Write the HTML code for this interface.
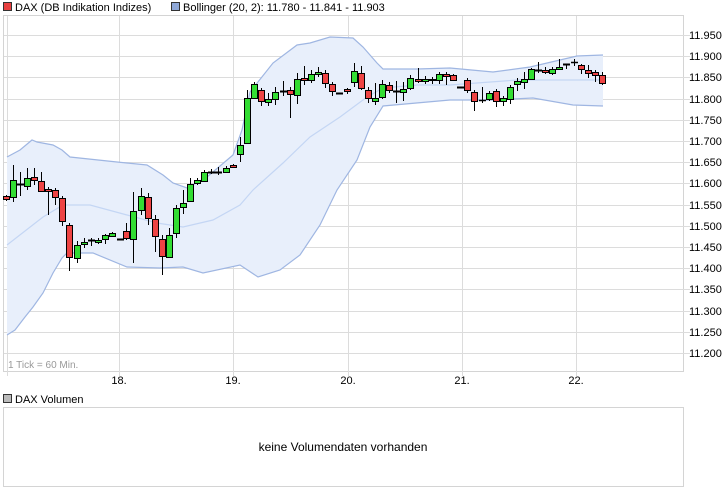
<!DOCTYPE html>
<html><head><meta charset="utf-8"><style>
body{margin:0;background:#fff;width:726px;height:496px;overflow:hidden;font-family:"Liberation Sans",sans-serif;}
svg{position:absolute;left:0;top:0}
</style></head><body>
<svg width="726" height="496" xmlns="http://www.w3.org/2000/svg" font-family="Liberation Sans, sans-serif">
<!-- legend -->
<rect x="3.5" y="2.5" width="8" height="8" fill="#e84040" stroke="#333"/>
<text x="15" y="11" font-size="11">DAX (DB Indikation Indizes)</text>
<rect x="171.5" y="2.5" width="8" height="8" fill="#8fa8d8" stroke="#333"/>
<text x="183" y="11" font-size="11">Bollinger (20, 2): 11.780 - 11.841 - 11.903</text>
<!-- chart frame -->
<rect x="3.5" y="15.5" width="680" height="356" fill="#fff" stroke="#d4d4d4"/>
<g stroke="#dcdcdc" stroke-width="1">
<line x1="4" y1="35.5" x2="690" y2="35.5"/><line x1="4" y1="56.5" x2="690" y2="56.5"/><line x1="4" y1="77.5" x2="690" y2="77.5"/><line x1="4" y1="99.5" x2="690" y2="99.5"/><line x1="4" y1="120.5" x2="690" y2="120.5"/><line x1="4" y1="141.5" x2="690" y2="141.5"/><line x1="4" y1="162.5" x2="690" y2="162.5"/><line x1="4" y1="183.5" x2="690" y2="183.5"/><line x1="4" y1="205.5" x2="690" y2="205.5"/><line x1="4" y1="226.5" x2="690" y2="226.5"/><line x1="4" y1="247.5" x2="690" y2="247.5"/><line x1="4" y1="268.5" x2="690" y2="268.5"/><line x1="4" y1="289.5" x2="690" y2="289.5"/><line x1="4" y1="311.5" x2="690" y2="311.5"/><line x1="4" y1="332.5" x2="690" y2="332.5"/><line x1="4" y1="353.5" x2="690" y2="353.5"/>
<line x1="7.5" y1="16" x2="7.5" y2="376"/><line x1="119.5" y1="16" x2="119.5" y2="376"/><line x1="233.5" y1="16" x2="233.5" y2="376"/><line x1="348.5" y1="16" x2="348.5" y2="376"/><line x1="462.5" y1="16" x2="462.5" y2="376"/><line x1="576.5" y1="16" x2="576.5" y2="376"/>
</g>
<!-- bollinger band -->
<path d="M7,157 L20,150 L32,140 L37,142 L53,145 L62,150 L70,157 L117,162 L147,165 L163,175 L173,183 L187,188 L207,177 L233,155 L242,130 L250,92 L273,63 L297,45 L310,43 L330,37 L353,38 L363,47 L377,63 L383,69 L417,69 L450,68 L493,72 L530,67 L577,56 L603,55 L603,106 L573,105 L533,98 L493,100 L450,100 L383,106 L370,127 L357,160 L337,190 L320,225 L300,255 L280,270 L258,277 L240,265 L203,273 L183,267 L160,268 L127,267 L93,253 L67,253 L62,258 L53,273 L43,293 L33,307 L25,317 L15,330 L7,335 Z" fill="#e8effb" stroke="none"/>
<path d="M7,157 L20,150 L32,140 L37,142 L53,145 L62,150 L70,157 L117,162 L147,165 L163,175 L173,183 L187,188 L207,177 L233,155 L242,130 L250,92 L273,63 L297,45 L310,43 L330,37 L353,38 L363,47 L377,63 L383,69 L417,69 L450,68 L493,72 L530,67 L577,56 L603,55" fill="none" stroke="#9fb6e2" stroke-width="1.2"/>
<path d="M7,335 L15,330 L25,317 L33,307 L43,293 L53,273 L62,258 L67,253 L93,253 L127,267 L160,268 L183,267 L203,273 L240,265 L258,277 L280,270 L300,255 L320,225 L337,190 L357,160 L370,127 L383,106 L450,100 L493,100 L533,98 L573,105 L603,106" fill="none" stroke="#9fb6e2" stroke-width="1.2"/>
<path d="M7,245 L43,217 L63,205 L90,205 L127,215 L157,223 L183,227 L213,220 L240,205 L253,190 L283,163 L310,137 L340,117 L367,97 L383,88 L417,85 L450,85 L517,80 L603,80" fill="none" stroke="#c4d6f4" stroke-width="1.2"/>
<!-- candles -->
<g stroke="#000" stroke-width="1">
<line x1="6.5" y1="195" x2="6.5" y2="201"/><rect x="3.5" y="196.5" width="6" height="3" fill="#ee4444"/>
<line x1="13.5" y1="165" x2="13.5" y2="202"/><rect x="10.5" y="180.5" width="6" height="17" fill="#33dd33"/>
<line x1="20.5" y1="172" x2="20.5" y2="196"/><line x1="17" y1="184.5" x2="24" y2="184.5" stroke-width="2"/>
<line x1="27.5" y1="168" x2="27.5" y2="190"/><rect x="24.5" y="178.5" width="6" height="8" fill="#33dd33"/>
<line x1="34.5" y1="168" x2="34.5" y2="185"/><rect x="31.5" y="177.5" width="6" height="3" fill="#ee4444"/>
<line x1="41.5" y1="172" x2="41.5" y2="192"/><rect x="38.5" y="181.5" width="6" height="10" fill="#ee4444"/>
<line x1="48.5" y1="187" x2="48.5" y2="215"/><rect x="45.5" y="189.5" width="6" height="2" fill="#ee4444"/>
<line x1="55.5" y1="188" x2="55.5" y2="205"/><rect x="52.5" y="190.5" width="6" height="7" fill="#ee4444"/>
<line x1="62.5" y1="196" x2="62.5" y2="226"/><rect x="59.5" y="198.5" width="6" height="23" fill="#ee4444"/>
<line x1="69.5" y1="223" x2="69.5" y2="271"/><rect x="66.5" y="225.5" width="6" height="32" fill="#ee4444"/>
<line x1="77.5" y1="241" x2="77.5" y2="263"/><rect x="74.5" y="245.5" width="6" height="13" fill="#33dd33"/>
<line x1="84.5" y1="238" x2="84.5" y2="248"/><rect x="81.5" y="242.5" width="6" height="2" fill="#33dd33"/>
<line x1="91.5" y1="238" x2="91.5" y2="246"/><line x1="88" y1="240.5" x2="95" y2="240.5" stroke-width="2"/>
<line x1="98.5" y1="238" x2="98.5" y2="244"/><rect x="95.5" y="240.5" width="6" height="2" fill="#33dd33"/>
<line x1="105.5" y1="234" x2="105.5" y2="244"/><rect x="102.5" y="235.5" width="6" height="4" fill="#33dd33"/>
<line x1="112.5" y1="232" x2="112.5" y2="237"/><rect x="109.5" y="233.5" width="6" height="3" fill="#33dd33"/>
<line x1="117" y1="239.5" x2="124" y2="239.5" stroke-width="2"/>
<line x1="126.5" y1="223" x2="126.5" y2="240"/><rect x="123.5" y="231.5" width="6" height="7" fill="#ee4444"/>
<line x1="133.5" y1="192" x2="133.5" y2="263"/><rect x="130.5" y="211.5" width="6" height="28" fill="#33dd33"/>
<line x1="141.5" y1="188" x2="141.5" y2="215"/><rect x="138.5" y="196.5" width="6" height="14" fill="#33dd33"/>
<line x1="148.5" y1="193" x2="148.5" y2="225"/><rect x="145.5" y="197.5" width="6" height="21" fill="#ee4444"/>
<line x1="155.5" y1="215" x2="155.5" y2="252"/><rect x="152.5" y="219.5" width="6" height="17" fill="#ee4444"/>
<line x1="162.5" y1="235" x2="162.5" y2="275"/><rect x="159.5" y="239.5" width="6" height="17" fill="#ee4444"/>
<line x1="169.5" y1="228" x2="169.5" y2="258"/><rect x="166.5" y="235.5" width="6" height="22" fill="#33dd33"/>
<line x1="176.5" y1="205" x2="176.5" y2="238"/><rect x="173.5" y="208.5" width="6" height="25" fill="#33dd33"/>
<line x1="183.5" y1="190" x2="183.5" y2="214"/><rect x="180.5" y="203.5" width="6" height="4" fill="#33dd33"/>
<line x1="190.5" y1="178" x2="190.5" y2="202"/><rect x="187.5" y="184.5" width="6" height="17" fill="#33dd33"/>
<line x1="197.5" y1="178" x2="197.5" y2="185"/><rect x="194.5" y="180.5" width="6" height="3" fill="#33dd33"/>
<line x1="204.5" y1="170" x2="204.5" y2="182"/><rect x="201.5" y="172.5" width="6" height="9" fill="#33dd33"/>
<line x1="211.5" y1="169" x2="211.5" y2="174"/><line x1="208" y1="172.5" x2="215" y2="172.5" stroke-width="2"/>
<line x1="218.5" y1="167" x2="218.5" y2="175"/><line x1="215" y1="172.5" x2="222" y2="172.5" stroke-width="2"/>
<line x1="226.5" y1="166" x2="226.5" y2="173"/><rect x="223.5" y="168.5" width="6" height="4" fill="#33dd33"/>
<line x1="233.5" y1="164" x2="233.5" y2="168"/><rect x="230.5" y="165.5" width="6" height="2" fill="#ee4444"/>
<line x1="240.5" y1="137" x2="240.5" y2="162"/><rect x="237.5" y="145.5" width="6" height="9" fill="#33dd33"/>
<line x1="247.5" y1="90" x2="247.5" y2="144"/><rect x="244.5" y="98.5" width="6" height="45" fill="#33dd33"/>
<line x1="254.5" y1="82" x2="254.5" y2="99"/><rect x="251.5" y="84.5" width="6" height="14" fill="#33dd33"/>
<line x1="261.5" y1="88" x2="261.5" y2="106"/><rect x="258.5" y="90.5" width="6" height="11" fill="#ee4444"/>
<line x1="268.5" y1="93" x2="268.5" y2="106"/><rect x="265.5" y="99.5" width="6" height="3" fill="#33dd33"/>
<line x1="275.5" y1="87" x2="275.5" y2="105"/><rect x="272.5" y="92.5" width="6" height="7" fill="#33dd33"/>
<line x1="283.5" y1="81" x2="283.5" y2="96"/><line x1="280" y1="91.5" x2="287" y2="91.5" stroke-width="2"/>
<line x1="290.5" y1="87" x2="290.5" y2="118"/><rect x="287.5" y="90.5" width="6" height="4" fill="#ee4444"/>
<line x1="297.5" y1="73" x2="297.5" y2="104"/><rect x="294.5" y="79.5" width="6" height="16" fill="#33dd33"/>
<line x1="304.5" y1="66" x2="304.5" y2="85"/><rect x="301.5" y="78.5" width="6" height="2" fill="#ee4444"/>
<line x1="311.5" y1="70" x2="311.5" y2="83"/><rect x="308.5" y="74.5" width="6" height="6" fill="#33dd33"/>
<line x1="318.5" y1="67" x2="318.5" y2="77"/><rect x="315.5" y="72.5" width="6" height="2" fill="#33dd33"/>
<line x1="325.5" y1="70" x2="325.5" y2="88"/><rect x="322.5" y="73.5" width="6" height="10" fill="#ee4444"/>
<line x1="332.5" y1="82" x2="332.5" y2="96"/><rect x="329.5" y="84.5" width="6" height="7" fill="#ee4444"/>
<line x1="336" y1="93.5" x2="343" y2="93.5" stroke-width="2"/>
<line x1="347.5" y1="88" x2="347.5" y2="94"/><rect x="344.5" y="89.5" width="6" height="2" fill="#ee4444"/>
<line x1="354.5" y1="63" x2="354.5" y2="87"/><rect x="351.5" y="71.5" width="6" height="11" fill="#33dd33"/>
<line x1="361.5" y1="66" x2="361.5" y2="90"/><rect x="358.5" y="73.5" width="6" height="15" fill="#ee4444"/>
<line x1="368.5" y1="87" x2="368.5" y2="103"/><rect x="365.5" y="90.5" width="6" height="8" fill="#ee4444"/>
<line x1="375.5" y1="83" x2="375.5" y2="105"/><rect x="372.5" y="98.5" width="6" height="3" fill="#33dd33"/>
<line x1="382.5" y1="80" x2="382.5" y2="99"/><rect x="379.5" y="84.5" width="6" height="13" fill="#33dd33"/>
<line x1="389.5" y1="82" x2="389.5" y2="93"/><rect x="386.5" y="85.5" width="6" height="5" fill="#ee4444"/>
<line x1="396.5" y1="81" x2="396.5" y2="103"/><line x1="393" y1="91.5" x2="400" y2="91.5" stroke-width="2"/>
<line x1="403.5" y1="82" x2="403.5" y2="101"/><rect x="400.5" y="89.5" width="6" height="3" fill="#33dd33"/>
<line x1="410.5" y1="75" x2="410.5" y2="90"/><rect x="407.5" y="78.5" width="6" height="10" fill="#33dd33"/>
<line x1="418.5" y1="68" x2="418.5" y2="83"/><rect x="415.5" y="79.5" width="6" height="2" fill="#ee4444"/>
<line x1="425.5" y1="76" x2="425.5" y2="84"/><rect x="422.5" y="79.5" width="6" height="2" fill="#33dd33"/>
<line x1="432.5" y1="77" x2="432.5" y2="84"/><rect x="429.5" y="79.5" width="6" height="1" fill="#ee4444"/>
<line x1="439.5" y1="72" x2="439.5" y2="84"/><rect x="436.5" y="74.5" width="6" height="6" fill="#33dd33"/>
<line x1="446.5" y1="72" x2="446.5" y2="85"/><rect x="443.5" y="74.5" width="6" height="2" fill="#ee4444"/>
<line x1="453.5" y1="74" x2="453.5" y2="81"/><rect x="450.5" y="75.5" width="6" height="5" fill="#ee4444"/>
<line x1="457" y1="87.5" x2="465" y2="87.5" stroke-width="2"/>
<line x1="467.5" y1="78" x2="467.5" y2="93"/><rect x="464.5" y="80.5" width="6" height="10" fill="#ee4444"/>
<line x1="474.5" y1="90" x2="474.5" y2="111"/><rect x="471.5" y="92.5" width="6" height="9" fill="#ee4444"/>
<line x1="482.5" y1="87" x2="482.5" y2="103"/><line x1="479" y1="100.5" x2="486" y2="100.5" stroke-width="1.5"/>
<line x1="489.5" y1="91" x2="489.5" y2="101"/><rect x="486.5" y="93.5" width="6" height="6" fill="#33dd33"/>
<line x1="496.5" y1="89" x2="496.5" y2="107"/><rect x="493.5" y="91.5" width="6" height="10" fill="#ee4444"/>
<line x1="503.5" y1="96" x2="503.5" y2="106"/><rect x="500.5" y="98.5" width="6" height="3" fill="#33dd33"/>
<line x1="510.5" y1="85" x2="510.5" y2="104"/><rect x="507.5" y="87.5" width="6" height="12" fill="#33dd33"/>
<line x1="517.5" y1="78" x2="517.5" y2="91"/><rect x="514.5" y="81.5" width="6" height="3" fill="#33dd33"/>
<line x1="524.5" y1="72" x2="524.5" y2="89"/><rect x="521.5" y="79.5" width="6" height="3" fill="#33dd33"/>
<line x1="531.5" y1="68" x2="531.5" y2="80"/><rect x="528.5" y="69.5" width="6" height="10" fill="#33dd33"/>
<line x1="538.5" y1="62" x2="538.5" y2="73"/><line x1="535" y1="70.5" x2="542" y2="70.5" stroke-width="2"/>
<line x1="545.5" y1="67" x2="545.5" y2="74"/><rect x="542.5" y="70.5" width="6" height="2" fill="#ee4444"/>
<line x1="552.5" y1="67" x2="552.5" y2="75"/><rect x="549.5" y="69.5" width="6" height="4" fill="#33dd33"/>
<line x1="559.5" y1="59" x2="559.5" y2="70"/><rect x="556.5" y="67.5" width="6" height="2" fill="#33dd33"/>
<line x1="566.5" y1="64" x2="566.5" y2="69"/><line x1="563" y1="64.5" x2="570" y2="64.5" stroke-width="2"/>
<line x1="574.5" y1="59" x2="574.5" y2="66"/><line x1="571" y1="62.5" x2="578" y2="62.5" stroke-width="1.5"/>
<line x1="581.5" y1="64" x2="581.5" y2="74"/><rect x="578.5" y="65.5" width="6" height="4" fill="#ee4444"/>
<line x1="588.5" y1="65" x2="588.5" y2="78"/><rect x="585.5" y="70.5" width="6" height="3" fill="#ee4444"/>
<line x1="595.5" y1="70" x2="595.5" y2="82"/><rect x="592.5" y="72.5" width="6" height="3" fill="#ee4444"/>
<line x1="602.5" y1="72" x2="602.5" y2="85"/><rect x="599.5" y="75.5" width="6" height="8" fill="#ee4444"/>
</g>
<!-- y axis labels -->
<g font-size="11" fill="#000">
<text x="689" y="39">11.950</text><text x="689" y="60">11.900</text><text x="689" y="81">11.850</text><text x="689" y="103">11.800</text><text x="689" y="124">11.750</text><text x="689" y="145">11.700</text><text x="689" y="166">11.650</text><text x="689" y="187">11.600</text><text x="689" y="209">11.550</text><text x="689" y="230">11.500</text><text x="689" y="251">11.450</text><text x="689" y="272">11.400</text><text x="689" y="293">11.350</text><text x="689" y="315">11.300</text><text x="689" y="336">11.250</text><text x="689" y="357">11.200</text>
</g>
<text x="8" y="368" font-size="10" fill="#999">1 Tick = 60 Min.</text>
<g font-size="11" text-anchor="middle">
<text x="119" y="384">18.</text><text x="233" y="384">19.</text><text x="348" y="384">20.</text><text x="462" y="384">21.</text><text x="576" y="384">22.</text>
</g>
<!-- volume -->
<rect x="3.5" y="394.5" width="8" height="8" fill="#bbb" stroke="#333"/>
<text x="15" y="403" font-size="11">DAX Volumen</text>
<rect x="3.5" y="407.5" width="680" height="79" fill="#fff" stroke="#d4d4d4"/>
<text x="343" y="451" font-size="12" text-anchor="middle">keine Volumendaten vorhanden</text>
</svg>
</body></html>
